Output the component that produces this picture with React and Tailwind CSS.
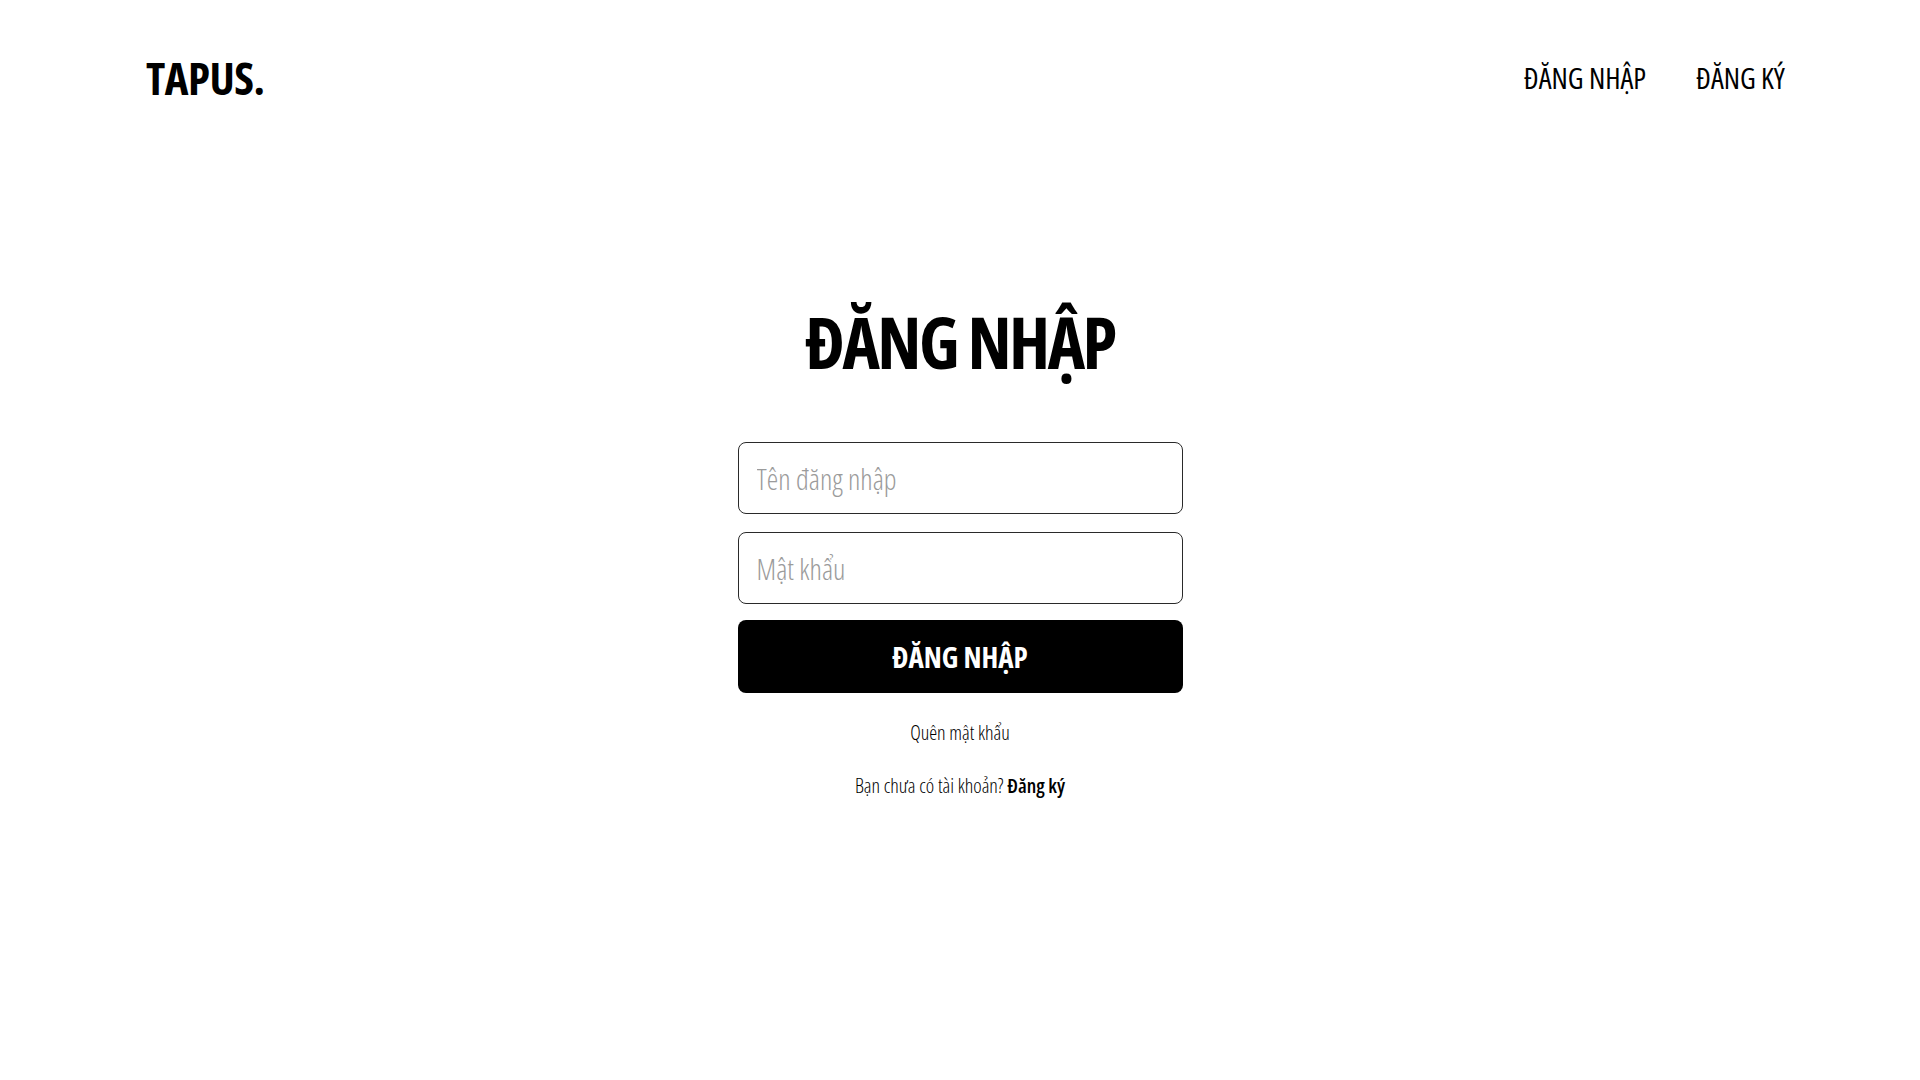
export default function App() {
  return (
    <div className="min-h-screen bg-white text-black font-['Open_Sans',sans-serif] [font-stretch:75%]">
      <header className="flex h-[155px] items-center justify-between pl-[146px] pr-[135px]">
        <a href="#" className="text-[45px] font-bold leading-none tracking-[-0.5px]">
          TAPUS.
        </a>
        <nav className="flex items-center gap-[50px] text-[29px] leading-none">
          <a href="#">ĐĂNG NHẬP</a>
          <a href="#">ĐĂNG KÝ</a>
        </nav>
      </header>

      <main className="flex flex-col items-center">
        <h1 className="mt-[151px] text-[71px] font-bold leading-none tracking-[-2.5px]">
          ĐĂNG NHẬP
        </h1>

        <form className="mt-[65px] flex w-[445px] flex-col" onSubmit={(e) => e.preventDefault()}>
          <input
            type="text"
            placeholder="Tên đăng nhập"
            className="h-[72px] rounded-lg border border-[#2a2a2a] px-[18px] text-[29px] font-light outline-none placeholder:text-[#9b9b9b]"
          />
          <input
            type="password"
            placeholder="Mật khẩu"
            className="mt-[18px] h-[72px] rounded-lg border border-[#2a2a2a] px-[18px] text-[29px] font-light outline-none placeholder:text-[#9b9b9b]"
          />
          <button
            type="submit"
            className="mt-[16px] h-[73px] rounded-lg bg-black text-[29px] font-bold text-white"
          >
            ĐĂNG NHẬP
          </button>
        </form>

        <a href="#" className="mt-[26px] text-[20px] font-light leading-[28px] text-black">
          Quên mật khẩu
        </a>
        <p className="mt-[25px] text-[20px] font-light leading-[28px] text-black">
          Bạn chưa có tài khoản?{" "}
          <a href="#" className="font-semibold text-black">
            Đăng ký
          </a>
        </p>
      </main>
    </div>
  );
}
